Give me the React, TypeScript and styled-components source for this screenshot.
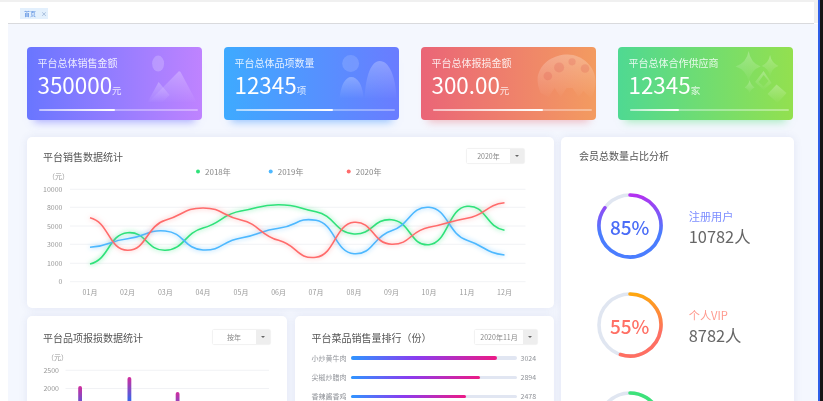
import React from "react";
import styled, { createGlobalStyle } from "styled-components";

const months = ["01月", "02月", "03月", "04月", "05月", "06月", "07月", "08月", "09月", "10月", "11月", "12月"];
const monthX = [90, 127.5, 165.3, 203, 241, 278.6, 316, 354, 391.5, 429, 467, 504.5];

// y positions of every month, read off the picture
const salesLines = [
  { color: "#2fe27a", glow: "rgba(47,226,122,.7)", ys: [264, 232.7, 250.3, 228, 211, 204.7, 211.7, 234, 219.7, 244.7, 206.3, 230.3] },
  { color: "#4db8ff", glow: "rgba(77,184,255,.7)", ys: [247.3, 238.7, 231, 250, 238, 228.3, 220.3, 253.7, 230.7, 207.3, 240.3, 255] },
  { color: "#ff6b6b", glow: "rgba(255,107,107,.55)", ys: [217.7, 250.3, 220.3, 208, 220, 240.3, 257.3, 222.3, 244.3, 227.3, 218.3, 202.7] },
];
const salesGrid = [
  { label: "10000", y: 189.3 },
  { label: "8000", y: 207.3 },
  { label: "5000", y: 226 },
  { label: "3000", y: 244.3 },
  { label: "1000", y: 263.3 },
  { label: "0", y: 281.7 },
];
const legend = [
  { label: "2018年", x: 198, color: "#2fe27a" },
  { label: "2019年", x: 270.7, color: "#4db8ff" },
  { label: "2020年", x: 348.7, color: "#ff6b6b" },
];

const lossGrid = [
  { label: "2500", y: 370.3 },
  { label: "2000", y: 388.5 },
];
const lossBars = [
  { x: 78.2, top: 386 },
  { x: 127.5, top: 377 },
  { x: 175.7, top: 392 },
];

const ranking = [
  { name: "小炒黄牛肉", value: 3024, percent: 88 },
  { name: "尖椒炒腊肉", value: 2894, percent: 78 },
  { name: "香辣酱香鸡", value: 2478, percent: 69.5 },
];

const stats = [
  { title: "平台总体销售金额", value: "350000", unit: "元", progress: 48, from: "#6976ff", to: "#bf83ff", shadow: "rgba(110,110,255,.55)", icon: "mountain" },
  { title: "平台总体品项数量", value: "12345", unit: "项", progress: 61, from: "#3eaaff", to: "#6a7cff", shadow: "rgba(70,150,255,.55)", icon: "people" },
  { title: "平台总体报损金额", value: "300.00", unit: "元", progress: 69, from: "#ea6577", to: "#f39b60", shadow: "rgba(236,110,120,.45)", icon: "palette" },
  { title: "平台总体合作供应商", value: "12345", unit: "家", progress: 31, from: "#4fd992", to: "#93e04f", shadow: "rgba(90,225,130,.5)", icon: "sparkle" },
];

const members = [
  { id: "a", percent: 85, label: "注册用户", count: "10782人", color: "#4a6cf7", labelColor: "#7c8dff", start: "#b92df0", end: "#4a7dff" },
  { id: "b", percent: 55, label: "个人VIP", count: "8782人", color: "#ff7065", labelColor: "#ff9a8f", start: "#ffa90a", end: "#ff6f62" },
  { id: "c", percent: 35, label: "", count: "", color: "#33dd77", labelColor: "#33dd77", start: "#3de27a", end: "#3de27a" },
];

function smoothPath(ys: number[]) {
  const pts = ys.map((y, i) => [monthX[i], y]);
  let d = `M${pts[0][0]} ${pts[0][1]}`;
  for (let i = 0; i < pts.length - 1; i++) {
    const prev = pts[Math.max(i - 1, 0)];
    const cur = pts[i];
    const next = pts[i + 1];
    const after = pts[Math.min(i + 2, pts.length - 1)];
    const k = 0.13;
    const c1x = cur[0] + 19;
    const c1y = cur[1] + (next[1] - prev[1]) * k;
    const c2x = next[0] - 19;
    const c2y = next[1] - (after[1] - cur[1]) * k;
    d += ` C${c1x} ${c1y} ${c2x} ${c2y} ${next[0]} ${next[1]}`;
  }
  return d;
}

function arcPath(percent: number) {
  const r = 31;
  const a = (percent / 100) * Math.PI * 2;
  const x = 33 + r * Math.sin(a);
  const y = 33 - r * Math.cos(a);
  return `M33 2 A${r} ${r} 0 ${percent > 50 ? 1 : 0} 1 ${x} ${y}`;
}

function CardIcon({ kind }: { kind: string }) {
  const id = `fade-${kind}`;
  return (
    <IconLayer viewBox="0 0 176 73">
      <defs>
        <linearGradient id={id} x1="0" y1="0" x2="0" y2="1">
          <stop offset="0" stopColor="#fff" stopOpacity="0.26" />
          <stop offset="1" stopColor="#fff" stopOpacity="0.01" />
        </linearGradient>
      </defs>
      {kind === "mountain" && (
        <g fill={`url(#${id})`}>
          <ellipse cx="131.5" cy="16.5" rx="6" ry="8" fill="#fff" fillOpacity="0.2" />
          <path d="M122 55 L152 24.5 Q153 24 154 25 L170 55 Z" />
          <path d="M121 55 L132 35 L143 48 L136 55 Z" />
        </g>
      )}
      {kind === "people" && (
        <g fill={`url(#${id})`}>
          <circle cx="127" cy="16.5" r="8.5" fill="#fff" fillOpacity="0.14" />
          <path d="M116 51 C117 38 122 30 127.5 30 C134 30 139 38 140 51 Z" />
          <path d="M141 51 C142 28 148 14 156 14 C166 14 172 30 173 51 Z" />
        </g>
      )}
      {kind === "palette" && (
        <g>
          <path
            fill={`url(#${id})`}
            d="M117 30 C120 15 134 7.5 147 7.5 C162 7.5 175 20 175 34 C175 42 173 48 170 51 L163 44 L158 50 L152 41 L146 41 L140 50 L134 41 L128 50 L120 46 C118 42 116.5 36 117 30 Z"
          />
          <g fill="#d9534f" fillOpacity="0.22">
            <circle cx="127.2" cy="29" r="4.3" />
            <circle cx="138.5" cy="20.5" r="5" />
            <circle cx="151.5" cy="14.8" r="3.6" />
            <circle cx="164.5" cy="21.5" r="4.3" />
          </g>
        </g>
      )}
      {kind === "sparkle" && (
        <g fill={`url(#${id})`}>
          <path d="M131 4 Q133 16 143 19.5 Q133 23 131 35 Q129 23 118 19.5 Q129 16 131 4 Z" />
          <path d="M152.5 8 Q154 16 161 19 Q154 21 152.5 30 Q151 21 144 19 Q151 16 152.5 8 Z" />
          <path d="M132 33 Q133 38 137 40.5 Q133 42 132 46.5 Q131 42 127 40.5 Q131 38 132 33 Z" />
          <path d="M146 24 L154 36 L146 43 L137.5 35 Z M146 28 L141 35 L146 39.5 L151 34 Z" fillRule="evenodd" />
          <path d="M150 47 L159 37.5 L169 46 L160 56 Z" />
        </g>
      )}
    </IconLayer>
  );
}

function Donut({ id, percent, color, start, end, showText }: { id: string; percent: number; color: string; start: string; end: string; showText: boolean }) {
  const gid = `ring-${id}`;
  return (
    <Ring>
      <svg width="66" height="66" viewBox="0 0 66 66">
        <defs>
          <linearGradient id={gid} gradientUnits="userSpaceOnUse" x1="33" y1="0" x2="33" y2="40">
            <stop offset="0" stopColor={start} />
            <stop offset="1" stopColor={end} />
          </linearGradient>
        </defs>
        <circle cx="33" cy="33" r="31" fill="none" stroke="#e0e6f1" strokeWidth="3.6" />
        <path d={arcPath(percent)} fill="none" stroke={`url(#${gid})`} strokeWidth="3.6" strokeLinecap="round" />
      </svg>
      {showText && <RingText $color={color}>{percent}%</RingText>}
    </Ring>
  );
}

function Select({ text, width }: { text: string; width: number }) {
  return (
    <SelectBox $width={width}>
      <SelectText>{text}</SelectText>
      <SelectArrow />
    </SelectBox>
  );
}

export default function App() {
  return (
    <>
      <GlobalStyle />
      <Screen>
        <Window>
          <TopBar>
            <Tag>
              首页<TagClose>×</TagClose>
            </Tag>
          </TopBar>
          <Main>
            <StatRow>
              {stats.map((s) => (
                <StatCard key={s.title} $from={s.from} $to={s.to} $shadow={s.shadow}>
                  <CardIcon kind={s.icon} />
                  <StatTitle>{s.title}</StatTitle>
                  <StatValue>
                    {s.value}
                    <StatUnit>{s.unit}</StatUnit>
                  </StatValue>
                  <Progress>
                    <ProgressFill style={{ width: `${s.progress}%` }} />
                  </Progress>
                </StatCard>
              ))}
            </StatRow>

            <Columns>
              <LeftColumn>
                <SalesPanel>
                  <PanelHead>
                    <PanelTitle>平台销售数据统计</PanelTitle>
                    <Select text="2020年" width={57} />
                  </PanelHead>
                  <ChartSvg width="487" height="135" viewBox="43 165 487 135">
                    {legend.map((l) => (
                      <g key={l.label}>
                        <circle cx={l.x} cy={171.5} r="2" fill={l.color} />
                        <LegendText x={l.x + 7} y={174.5}>{l.label}</LegendText>
                      </g>
                    ))}
                    <AxisText x={48} y={179}>（元）</AxisText>
                    {salesGrid.map((g) => (
                      <g key={g.label}>
                        <GridLine x1="70" x2="525.5" y1={g.y} y2={g.y} />
                        <AxisText x={62.5} y={g.y + 2.5} textAnchor="end">{g.label}</AxisText>
                      </g>
                    ))}
                    {months.map((m, i) => (
                      <AxisText key={m} x={monthX[i]} y={294.5} textAnchor="middle">{m}</AxisText>
                    ))}
                    {salesLines.map((l) => (
                      <CurveLine key={l.color} d={smoothPath(l.ys)} $color={l.color} $glow={l.glow} />
                    ))}
                  </ChartSvg>
                </SalesPanel>

                <BottomRow>
                  <LossPanel>
                    <PanelHead>
                      <PanelTitle>平台品项报损数据统计</PanelTitle>
                      <Select text="按年" width={57} />
                    </PanelHead>
                    <ChartSvg width="235" height="60" viewBox="43 346 235 60">
                      <defs>
                        <linearGradient id="lossBar" x1="0" y1="0" x2="0" y2="1">
                          <stop offset="0" stopColor="#d22c9c" />
                          <stop offset="0.7" stopColor="#3f63e6" />
                        </linearGradient>
                      </defs>
                      <AxisText x={47} y={359.5}>（元）</AxisText>
                      {lossGrid.map((g) => (
                        <g key={g.label}>
                          <GridLine x1="65.5" x2="269" y1={g.y} y2={g.y} />
                          <AxisText x={59} y={g.y + 2.5} textAnchor="end">{g.label}</AxisText>
                        </g>
                      ))}
                      {lossBars.map((b) => (
                        <rect key={b.x} x={b.x} y={b.top} width="3.8" height="32" rx="1.9" fill="url(#lossBar)" />
                      ))}
                    </ChartSvg>
                  </LossPanel>

                  <RankPanel>
                    <PanelHead>
                      <PanelTitle>平台菜品销售量排行（份）</PanelTitle>
                      <Select text="2020年11月" width={62} />
                    </PanelHead>
                    <RankList>
                      {ranking.map((r) => (
                        <RankRow key={r.name}>
                          <RankName>{r.name}</RankName>
                          <RankTrack>
                            <RankFill style={{ width: `${r.percent}%` }} />
                          </RankTrack>
                          <RankValue>{r.value}</RankValue>
                        </RankRow>
                      ))}
                    </RankList>
                  </RankPanel>
                </BottomRow>
              </LeftColumn>

              <MemberPanel>
                <MemberTitle>会员总数量占比分析</MemberTitle>
                <MemberList>
                  {members.map((m) => (
                    <MemberRow key={m.id}>
                      <Donut id={m.id} percent={m.percent} color={m.color} start={m.start} end={m.end} showText={m.label !== ""} />
                      {m.label && (
                        <MemberInfo>
                          <MemberLabel $color={m.labelColor}>{m.label}</MemberLabel>
                          <MemberCount>{m.count}</MemberCount>
                        </MemberInfo>
                      )}
                    </MemberRow>
                  ))}
                </MemberList>
              </MemberPanel>
            </Columns>
          </Main>
        </Window>
        <BlueEdge />
      </Screen>
    </>
  );
}

const GlobalStyle = createGlobalStyle`
  html, body {
    margin: 0;
    padding: 0;
    background: #111;
    font-family: "Noto Sans CJK SC", "Noto Sans", sans-serif;
  }
`;

const Screen = styled.div`
  display: flex;
  width: 823px;
  height: 401px;
  overflow: hidden;
  background: #151515;
`;

const Window = styled.div`
  width: 818px;
  flex: none;
  display: flex;
  flex-direction: column;
  box-sizing: border-box;
  padding-top: 2px;
  overflow: hidden;
  background: linear-gradient(#f0f0f0 0 23px, #fff 23px);
  filter: blur(0.3px);
`;

const BlueEdge = styled.div`
  width: 2px;
  height: 100%;
  background: #2f5fe8;
`;

const TopBar = styled.div`
  position: relative;
  height: 22px;
  flex: none;
  margin-right: 4px;
  padding: 6px 0 0 20px;
  box-sizing: border-box;
  background: #fff;

  &::after {
    content: "";
    position: absolute;
    left: 8px;
    right: 0;
    bottom: 0;
    height: 1px;
    background: #d9dadd;
  }
`;

const Tag = styled.div`
  display: flex;
  align-items: center;
  width: 28px;
  height: 10.5px;
  box-sizing: border-box;
  padding-left: 4px;
  font-size: 6px;
  color: #5a8fe0;
  background: #e3f0fd;
`;

const TagClose = styled.span`
  margin-left: 5px;
  color: #7b9ac4;
  font-size: 6px;
`;

const Main = styled.div`
  flex: 1;
  margin-left: 8px;
  padding: 22.5px 25px 0 18.5px;
  background: #f4f7fe;
  min-height: 0;
`;

const StatRow = styled.div`
  display: grid;
  grid-template-columns: repeat(4, 175.5px);
  column-gap: 21.5px;
`;

const StatCard = styled.div<{ $from: string; $to: string; $shadow: string }>`
  position: relative;
  height: 73px;
  box-sizing: border-box;
  padding: 8px 4px 0 11px;
  border-radius: 4px;
  color: #fff;
  background: linear-gradient(90deg, ${(p) => p.$from}, ${(p) => p.$to});
  box-shadow: 0 9px 8px -7px ${(p) => p.$shadow};
`;

const IconLayer = styled.svg`
  position: absolute;
  left: 0;
  top: 0;
  width: 100%;
  height: 100%;
  pointer-events: none;
`;

const StatTitle = styled.div`
  position: relative;
  font-size: 10px;
  line-height: 15px;
  color: rgba(255, 255, 255, 0.85);
`;

const StatValue = styled.div`
  position: relative;
  margin-top: 1.5px;
  font-size: 22.4px;
  line-height: 26px;
  white-space: nowrap;
`;

const StatUnit = styled.span`
  font-size: 9.5px;
  color: rgba(255, 255, 255, 0.8);
`;

const Progress = styled.div`
  position: relative;
  margin: 5.5px 0 0 1.5px;
  width: 159px;
  height: 2px;
  border-radius: 1px;
  background: rgba(255, 255, 255, 0.35);
`;

const ProgressFill = styled.div`
  height: 100%;
  border-radius: 1px;
  background: linear-gradient(90deg, rgba(255, 255, 255, 0.35), #fff);
`;

const Columns = styled.div`
  display: flex;
  gap: 7.5px;
  margin-top: 17.5px;
`;

const LeftColumn = styled.div`
  width: 527px;
  flex: none;
  display: flex;
  flex-direction: column;
  gap: 8px;
`;

const Panel = styled.div`
  box-sizing: border-box;
  background: #fff;
  border-radius: 5px;
  box-shadow: 0 0 8px rgba(70, 80, 160, 0.1);
`;

const SalesPanel = styled(Panel)`
  height: 171px;
  padding: 12px 23.5px 0 16.5px;
`;

const PanelHead = styled.div`
  display: flex;
  align-items: center;
  justify-content: space-between;
  height: 14px;
  margin-right: 6px;
`;

const PanelTitle = styled.div`
  font-size: 10px;
  color: #555;
  white-space: nowrap;
`;

const SelectBox = styled.div<{ $width: number }>`
  display: flex;
  width: ${(p) => p.$width}px;
  height: 14px;
  flex: none;
  box-sizing: border-box;
  background: #fff;
  box-shadow: 0 0 1.5px rgba(0, 0, 0, 0.2);
`;

const SelectText = styled.div`
  flex: 1;
  text-align: center;
  font-size: 7px;
  line-height: 14px;
  color: #888;
`;

const SelectArrow = styled.div`
  width: 14px;
  background: #eee;
  position: relative;

  &::after {
    content: "";
    position: absolute;
    left: 5px;
    top: 6px;
    border-left: 2.5px solid transparent;
    border-right: 2.5px solid transparent;
    border-top: 2.5px solid #666;
  }
`;

const ChartSvg = styled.svg`
  display: block;
  margin-top: 2px;
  overflow: visible;
`;

const LegendText = styled.text`
  font-size: 8px;
  fill: #888;
`;

const AxisText = styled.text`
  font-size: 7px;
  fill: #999;
`;

const GridLine = styled.line`
  stroke: #eeeff3;
  stroke-width: 0.8;
`;

const CurveLine = styled.path<{ $color: string; $glow: string }>`
  fill: none;
  stroke: ${(p) => p.$color};
  stroke-width: 1.6;
  filter: drop-shadow(0 0 2.5px ${(p) => p.$glow});
`;

const BottomRow = styled.div`
  display: flex;
  gap: 8.5px;
`;

const LossPanel = styled(Panel)`
  width: 260px;
  height: 171px;
  flex: none;
  padding: 14px 11px 0 16.5px;
  position: relative;
`;

const RankPanel = styled(Panel)`
  width: 258.5px;
  height: 171px;
  flex: none;
  padding: 14px 10.5px 0 16.5px;
`;

const RankList = styled.div`
  display: flex;
  flex-direction: column;
  gap: 12.3px;
  margin-top: 10.5px;
`;

const RankRow = styled.div`
  display: flex;
  align-items: center;
  height: 7px;
`;

const RankName = styled.div`
  width: 36px;
  font-size: 7px;
  line-height: 7px;
  color: #909399;
  white-space: nowrap;
`;

const RankTrack = styled.div`
  width: 166px;
  height: 3.6px;
  border-radius: 2px;
  background: #e1e6f2;
  margin-left: 3px;
`;

const RankFill = styled.div`
  height: 100%;
  border-radius: 2px;
  background: linear-gradient(90deg, #2f95ff, #8a3cf0 45%, #ec1a85);
`;

const RankValue = styled.div`
  margin-left: 4px;
  font-size: 7px;
  line-height: 7px;
  color: #909399;
`;

const MemberPanel = styled(Panel)`
  width: 232.5px;
  flex: none;
  height: 340px;
  padding: 12px 0 0 18px;
`;

const MemberTitle = styled.div`
  height: 14px;
  font-size: 10px;
  line-height: 14px;
  color: #555;
`;

const MemberList = styled.div`
  display: flex;
  flex-direction: column;
  gap: 33px;
  margin-top: 30px;
  margin-left: 17.7px;
`;

const MemberRow = styled.div`
  display: flex;
  align-items: center;
  gap: 26px;
`;

const Ring = styled.div`
  position: relative;
  width: 66px;
  height: 66px;
  flex: none;

  svg {
    display: block;
  }
`;

const RingText = styled.div<{ $color: string }>`
  position: absolute;
  inset: 0;
  display: flex;
  align-items: center;
  justify-content: center;
  font-size: 19px;
  font-weight: 500;
  color: ${(p) => p.$color};
`;

const MemberInfo = styled.div`
  display: flex;
  flex-direction: column;
  padding-top: 4px;
`;

const MemberLabel = styled.div<{ $color: string }>`
  font-size: 11.2px;
  line-height: 15px;
  color: ${(p) => p.$color};
`;

const MemberCount = styled.div`
  font-size: 16.4px;
  line-height: 24px;
  color: #666;
`;
